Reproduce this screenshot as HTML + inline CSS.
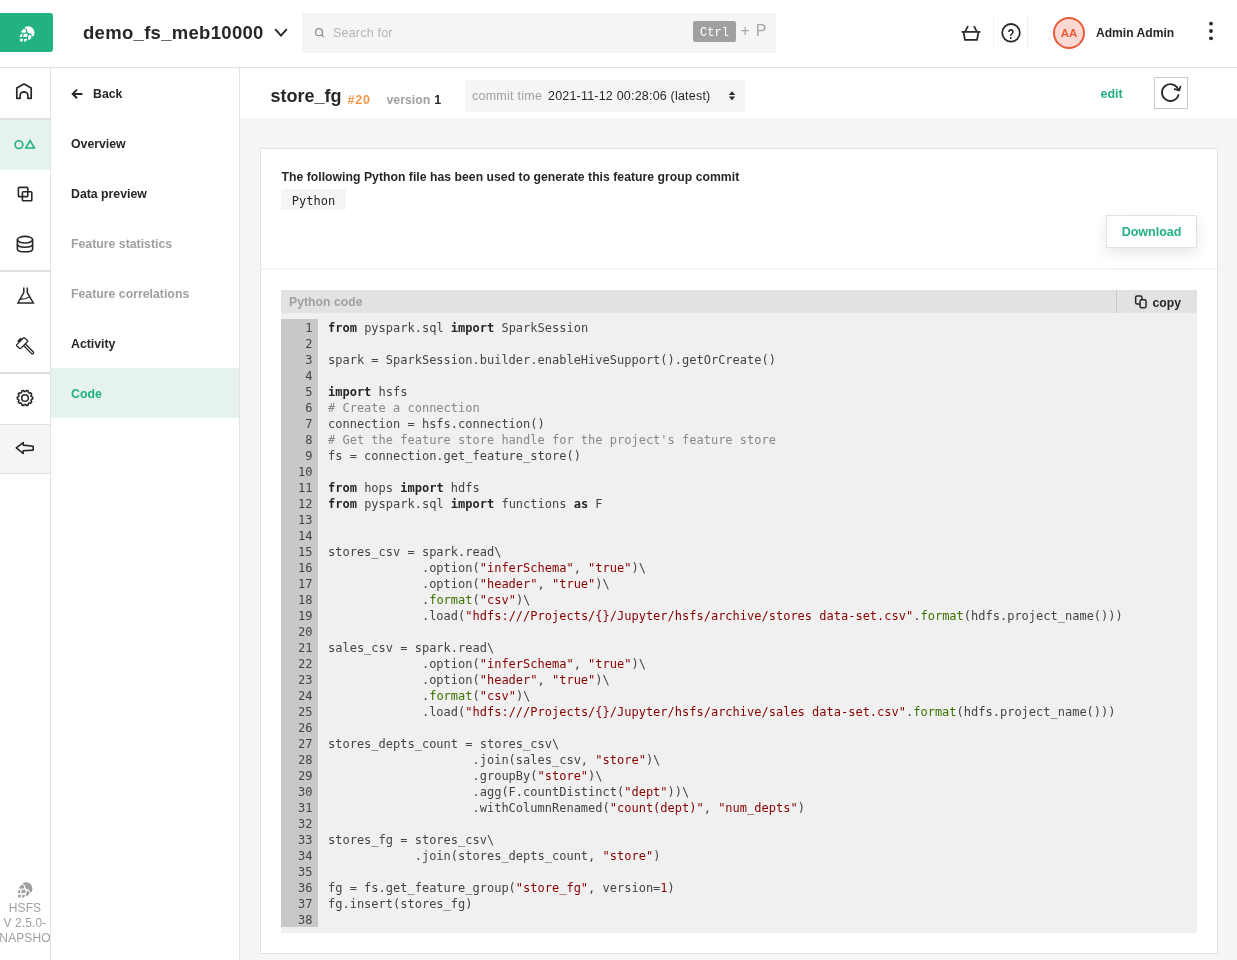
<!DOCTYPE html>
<html lang="en">
<head>
<meta charset="utf-8">
<title>store_fg - Code</title>
<style>
*{box-sizing:border-box;margin:0;padding:0}
html,body{width:1237px;height:960px;overflow:hidden;background:#f5f5f5;font-family:"Liberation Sans",sans-serif;color:#272727}
.abs{position:absolute}
#root{position:absolute;left:0;top:0;width:1237px;height:960px;overflow:hidden;will-change:transform}
#header{position:absolute;left:0;top:0;width:1237px;height:68px;background:#fff;border-bottom:1px solid #e2e2e2}
#logo{position:absolute;left:0;top:13px;width:53px;height:39px;background:#21b182;border-radius:0 3px 3px 0}
#proj{position:absolute;left:83px;top:21px;font-size:18.5px;font-weight:bold;color:#272727;letter-spacing:0.3px;line-height:24px;white-space:nowrap}
#search{position:absolute;left:302px;top:13px;width:474px;height:40px;background:#f5f5f5}
#search .ph{position:absolute;left:31px;top:13px;font-size:12.5px;color:#b4b4b4;line-height:15px;letter-spacing:0.2px}
#ctrl{position:absolute;left:391px;top:8px;width:43px;height:21px;background:#a0a0a0;border-radius:2px;color:#fff;font-family:"Liberation Mono",monospace;font-size:12px;line-height:24px;text-align:center;overflow:hidden}
#plusp{position:absolute;left:438.5px;top:8px;font-size:16px;color:#a8a8a8;line-height:20px;white-space:nowrap;word-spacing:1.5px}
#avatar{position:absolute;left:1053px;top:17px;width:32px;height:32px;border-radius:50%;background:#fbd9d3;border:2px solid #eb5a38;color:#eb5a38;font-size:11.5px;font-weight:bold;text-align:center;line-height:28px}
#uname{position:absolute;left:1096px;top:25px;font-size:12.1px;font-weight:bold;color:#272727;line-height:16px;white-space:nowrap}
.vsep{position:absolute;top:16px;width:1px;height:32px;background:#f0f0f0}
#nav{position:absolute;left:0;top:68px;width:51px;height:892px;background:#fff;border-right:1px solid #e2e2e2}
.nitem{position:absolute;left:0;width:50px;height:50px}
.nitem svg{position:absolute;left:14px;top:14px}
.nline{position:absolute;left:0;width:50px;height:1px;background:#dfdfdf}
#side{position:absolute;left:51px;top:68px;width:189px;height:892px;background:#fff;border-right:1px solid #e2e2e2}
.sitem{position:absolute;left:20px;font-size:12.3px;font-weight:bold;color:#272727;line-height:16px;white-space:nowrap}
.sitem.dis{color:#a0a0a0}
#selrow{position:absolute;left:0;top:300px;width:188px;height:50px;background:#e5f2ee}
#topbar{position:absolute;left:240px;top:68px;width:997px;height:50px;background:#fff}
#card{position:absolute;left:260px;top:148px;width:958px;height:806px;background:#fff;border:1px solid #e2e2e2}
#codehead{position:absolute;left:281px;top:290px;width:916px;height:23px;background:#e2e2e2;z-index:2}
#codebody{position:absolute;left:281px;top:312px;width:916px;height:621px;background:#f0f0f0}
#gutter{position:absolute;left:0;top:7px;width:37px;height:608px;background:#c8c8c8}
pre{font-family:"DejaVu Sans Mono","Liberation Mono",monospace;font-size:12px;line-height:16px;color:#444}
#nums{position:absolute;left:0;top:7.5px;width:31.4px;text-align:right;color:#444}
#code{position:absolute;left:47px;top:7.5px;white-space:pre}
.k{font-weight:bold;color:#272727}
.c{color:#888}
.s{color:#880000}
.b{color:#397300}

#qm{position:absolute;left:1000px;top:24.6px;width:22px;text-align:center;font-size:14px;font-weight:bold;line-height:18px;color:#272727;transform:scaleX(0.8)}
.nsel{position:absolute;left:0;top:52px;width:50px;height:50px;background:#e5f2ee}
.ngrey{position:absolute;left:0;top:357px;width:50px;height:48px;background:#f5f5f5}
#ver{position:absolute;left:-10px;top:833px;width:70px;text-align:center;font-size:12px;line-height:15px;color:#a0a0a0;letter-spacing:0.1px}
#fgname{position:absolute;left:30.5px;top:16px;font-size:18px;font-weight:bold;line-height:24px;color:#272727;white-space:nowrap}
#fgid{position:absolute;left:107.5px;top:24px;font-size:12.5px;font-weight:bold;line-height:16px;color:#f2994a;white-space:nowrap;letter-spacing:0.8px}
#verlab{position:absolute;left:146.5px;top:24px;font-size:12.3px;font-weight:bold;line-height:16px;color:#a0a0a0;white-space:nowrap}
#vernum{position:absolute;left:194.2px;top:24px;font-size:12.5px;font-weight:bold;line-height:16px;color:#272727}
#sel{position:absolute;left:225px;top:12px;width:280px;height:32px;background:#f5f5f5}
#ct{position:absolute;left:7px;top:8px;font-size:12.5px;line-height:16px;color:#a0a0a0;white-space:nowrap;letter-spacing:0.25px}
#cv{position:absolute;left:83px;top:8px;font-size:12.5px;line-height:16px;color:#272727;white-space:nowrap;letter-spacing:0.2px}
#edit{position:absolute;left:860.5px;top:18px;font-size:12.5px;font-weight:bold;line-height:16px;color:#21b182;white-space:nowrap}
#refresh{position:absolute;left:914px;top:9px;width:34px;height:32px;border:1px solid #c8c8c8;background:#fff}
#ctitle{position:absolute;left:20.5px;top:20px;letter-spacing:0.035px;font-size:12.2px;font-weight:bold;line-height:16px;color:#272727;white-space:nowrap}
#tag{position:absolute;left:20px;top:40px;width:65px;height:21px;background:#f5f5f5;border-radius:2px;font-family:"DejaVu Sans Mono","Liberation Mono",monospace;font-size:12px;line-height:24.5px;text-align:center;color:#272727}
#dl{position:absolute;left:845px;top:66px;width:91px;height:33px;border:1px solid #e2e2e2;background:#fff;box-shadow:0 5px 15px rgba(0,0,0,0.10);font-size:12.5px;font-weight:bold;color:#21b182;text-align:center;line-height:33px}
#csep{position:absolute;left:0;top:119px;width:956px;height:2px;background:#f5f5f5}
#chl{position:absolute;left:8px;top:4px;letter-spacing:0.05px;font-size:12.2px;font-weight:bold;line-height:16px;color:#a0a0a0;white-space:nowrap}
#chsep{position:absolute;left:835px;top:0;width:1px;height:23px;background:#c8c8c8}
#copy{position:absolute;left:871.5px;top:5px;font-size:12.2px;font-weight:bold;line-height:16px;color:#272727}
</style>
</head>
<body>
<div id="root">
<div id="header">
  <div id="logo">
    <svg class="abs" style="left:18px;top:11.5px" width="18" height="18" viewBox="18 24.5 18 18"><g fill="#fff"><path d="M24.3 27.4 C25.2 26.4 26.6 25.7 27.9 25.7 C31.6 25.7 34.5 28.6 34.4 32.2 C34.4 33.4 34.1 34.6 33.6 35.6 L32 35.9 C31.8 35 31.5 34.2 31 33.6 C30.2 32.8 29.2 32.6 28 32.6 C27.8 31.9 27.6 31.4 27.4 30.9 C27.4 29.6 26.6 28.4 25.3 27.8 Z"/><path d="M21 31.5 C21.6 30.2 22.6 29.1 23.7 28.4 C24.4 28.3 25 28.5 25.4 28.9 C26 29.3 26.3 30 26.2 30.6 C26.2 31.2 26 31.6 25.6 31.9 C24.6 32.3 23.4 32.4 22.4 32.2 Z"/><path d="M19.7 36.5 C19.7 35.8 19.9 35.2 20.1 34.7 C20.5 34 21.1 33.5 21.8 33.2 L22.7 33.2 C22.2 34.2 22 35.4 22 36.5 Z"/><path d="M23.25 36.5 C23.2 35.4 23.5 34.3 23.9 33.4 C24.8 33.4 25.6 33.3 26.4 33 C27 33.2 27.5 33.6 27.8 34.2 C27.4 34.9 27.1 35.7 27 36.5 Z"/><path d="M28 39 C27.9 37.9 28 36.9 28.3 35.9 C28.6 35.2 29 34.7 29.5 34.2 C30 34.2 30.5 34.5 30.8 34.9 C31.2 35.4 31.5 36.1 31.6 36.8 C31.3 37.4 30.8 37.9 30.3 38.4 C29.8 38.9 29.3 39.2 28.7 39.5 Z"/><path d="M20 38.2 H22.8 V40.9 L20 40.7 Z"/><path d="M24.1 38.4 L27 38.2 C26.9 38.9 26.9 39.5 26.8 40.1 C26.1 40.7 25.3 41.2 24.5 41.5 L24.1 41.3 Z"/></g></svg>
  </div>
  <div id="proj">demo_fs_meb10000</div>
  <svg class="abs" style="left:273px;top:26px" width="16" height="14" viewBox="0 0 16 14"><path d="M2.2 3.2 L8 9.6 L13.8 3.2" fill="none" stroke="#272727" stroke-width="1.9"/></svg>
  <div id="search">
    <svg class="abs" style="left:12px;top:14px" width="12" height="12" viewBox="0 0 12 12"><circle cx="5" cy="5.2" r="3.5" fill="none" stroke="#8c8c8c" stroke-width="1.2"/><path d="M7.6 7.8 L9.8 10" stroke="#8c8c8c" stroke-width="1.2"/></svg>
    <div class="ph">Search for</div>
    <div id="ctrl">Ctrl</div>
    <div id="plusp">+ P</div>
  </div>
  <svg class="abs" style="left:960px;top:24px" width="22" height="18" viewBox="0 0 22 18"><g fill="none" stroke="#272727" stroke-width="1.7"><path d="M1.6 7.9 H20.4"/><path d="M3.5 8 L5 15.9 H17 L18.5 8"/><path d="M5.4 7.2 L8 2.2"/><path d="M16.6 7.2 L14 2.2"/></g></svg>
  <div class="vsep" style="left:993px"></div>
  <svg class="abs" style="left:1000px;top:22px" width="22" height="22" viewBox="0 0 22 22"><circle cx="11" cy="10.8" r="8.8" fill="none" stroke="#272727" stroke-width="1.8"/></svg>
  <div id="qm">?</div>
  <div class="vsep" style="left:1027px"></div>
  <div id="avatar">AA</div>
  <div id="uname">Admin Admin</div>
  <svg class="abs" style="left:1207px;top:20px" width="8" height="24" viewBox="0 0 8 24"><circle cx="4" cy="3.6" r="1.9" fill="#272727"/><circle cx="4" cy="11" r="1.9" fill="#272727"/><circle cx="4" cy="18.3" r="1.9" fill="#272727"/></svg>
</div>

<div id="nav">
  <div class="nsel"></div>
  <div class="ngrey"></div>
  <div class="nline" style="top:50px;height:2px"></div>
  <div class="nline" style="top:202px;height:2px"></div>
  <div class="nline" style="top:304px;height:2px"></div>
  <div class="nline" style="top:356px"></div>
  <div class="nline" style="top:405px"></div>
  <svg class="abs" style="left:0;top:0" width="50" height="420" viewBox="0 68 50 420">
    <g fill="none" stroke="#272727" stroke-width="1.6" stroke-linejoin="round" stroke-linecap="round">
      <!-- home -->
      <path d="M16.8 98.3 V88 L24 83.9 L31.2 88 V98.3 H27.9 V95.2 A3.9 3.4 0 0 0 20.1 95.2 V98.3 Z" stroke-width="1.7"/>
      <!-- squares -->
      <rect x="18.4" y="187.4" width="9.4" height="9.2" rx="0.8"/>
      <rect x="22.4" y="191.7" width="9.4" height="9" rx="0.8"/>
      <!-- database -->
      <ellipse cx="25" cy="239.7" rx="7.6" ry="3.3"/>
      <path d="M17.4 239.7 V249.2 C17.4 250.7 20.8 251.8 25 251.8 C29.2 251.8 32.6 250.7 32.6 249.2 V239.7"/>
      <path d="M17.4 244.6 C17.4 246.1 20.8 247.2 25 247.2 C29.2 247.2 32.6 246.1 32.6 244.6"/>
      <!-- flask -->
      <path d="M23.8 287.4 V292.6 L17.9 303 H33.3 L27.3 292.6 V287.4" stroke-width="1.5" stroke-linejoin="miter" stroke-linecap="butt"/>
      <path d="M20.2 299.4 C22.4 298.2 24.2 299.6 26 298.6 C27.2 298 28.2 297.2 29.6 297" stroke-width="1.1"/>
      <!-- hammer -->
      <path d="M16.8 344.6 L23.4 338 Q24 337.4 24.6 338 L27.4 340.6 Q28 341.2 27.4 341.8 L20.8 348.4 Q20.2 349 19.6 348.4 L16.8 345.8 Q16.2 345.2 16.8 344.6 Z" stroke-width="1.3"/>
      <path d="M25.6 344.2 L33.4 352 Q34 352.8 33.2 353.6 Q32.4 354.4 31.6 353.6 L23.8 345.8" stroke-width="1.3"/>
      <path d="M18.6 341.2 L20.8 339" stroke-width="2.2"/>
      <!-- gear -->
      <circle cx="25" cy="398" r="3.3" stroke-width="1.5"/>
      <path stroke-width="1.5" d="M32.64 397.03 A7.7 7.7 0 0 1 32.64 398.97 L31.35 399.38 A6.5 6.5 0 0 1 30.95 400.62 L31.75 401.71 A7.7 7.7 0 0 1 30.61 403.27 L29.33 402.85 A6.5 6.5 0 0 1 28.27 403.62 L28.28 404.97 A7.7 7.7 0 0 1 26.44 405.56 L25.65 404.47 A6.5 6.5 0 0 1 24.35 404.47 L23.56 405.56 A7.7 7.7 0 0 1 21.72 404.97 L21.73 403.62 A6.5 6.5 0 0 1 20.67 402.85 L19.39 403.27 A7.7 7.7 0 0 1 18.25 401.71 L19.05 400.62 A6.5 6.5 0 0 1 18.65 399.38 L17.36 398.97 A7.7 7.7 0 0 1 17.36 397.03 L18.65 396.62 A6.5 6.5 0 0 1 19.05 395.38 L18.25 394.29 A7.7 7.7 0 0 1 19.39 392.73 L20.67 393.15 A6.5 6.5 0 0 1 21.73 392.38 L21.72 391.03 A7.7 7.7 0 0 1 23.56 390.44 L24.35 391.53 A6.5 6.5 0 0 1 25.65 391.53 L26.44 390.44 A7.7 7.7 0 0 1 28.28 391.03 L28.27 392.38 A6.5 6.5 0 0 1 29.33 393.15 L30.61 392.73 A7.7 7.7 0 0 1 31.75 394.29 L30.95 395.38 A6.5 6.5 0 0 1 31.35 396.62 Z"/>
      <!-- arrow -->
      <path d="M16.3 447.8 L23.2 442.6 V445.1 L33.2 446.2 V450.1 L23.2 450.8 V453.5 Z" stroke-width="1.6"/>
    </g>
    <g fill="none" stroke="#21b182" stroke-width="1.6">
      <circle cx="18.9" cy="144.6" r="3.9"/>
      <path d="M30.1 140.6 L34.4 148 H25.8 Z" stroke-linejoin="miter"/>
    </g>
  </svg>
  <svg class="abs" style="left:15.8px;top:812.6px" width="18" height="18" viewBox="18 24.5 18 18"><g fill="#a0a0a0"><path d="M24.3 27.4 C25.2 26.4 26.6 25.7 27.9 25.7 C31.6 25.7 34.5 28.6 34.4 32.2 C34.4 33.4 34.1 34.6 33.6 35.6 L32 35.9 C31.8 35 31.5 34.2 31 33.6 C30.2 32.8 29.2 32.6 28 32.6 C27.8 31.9 27.6 31.4 27.4 30.9 C27.4 29.6 26.6 28.4 25.3 27.8 Z"/><path d="M21 31.5 C21.6 30.2 22.6 29.1 23.7 28.4 C24.4 28.3 25 28.5 25.4 28.9 C26 29.3 26.3 30 26.2 30.6 C26.2 31.2 26 31.6 25.6 31.9 C24.6 32.3 23.4 32.4 22.4 32.2 Z"/><path d="M19.7 36.5 C19.7 35.8 19.9 35.2 20.1 34.7 C20.5 34 21.1 33.5 21.8 33.2 L22.7 33.2 C22.2 34.2 22 35.4 22 36.5 Z"/><path d="M23.25 36.5 C23.2 35.4 23.5 34.3 23.9 33.4 C24.8 33.4 25.6 33.3 26.4 33 C27 33.2 27.5 33.6 27.8 34.2 C27.4 34.9 27.1 35.7 27 36.5 Z"/><path d="M28 39 C27.9 37.9 28 36.9 28.3 35.9 C28.6 35.2 29 34.7 29.5 34.2 C30 34.2 30.5 34.5 30.8 34.9 C31.2 35.4 31.5 36.1 31.6 36.8 C31.3 37.4 30.8 37.9 30.3 38.4 C29.8 38.9 29.3 39.2 28.7 39.5 Z"/><path d="M20 38.2 H22.8 V40.9 L20 40.7 Z"/><path d="M24.1 38.4 L27 38.2 C26.9 38.9 26.9 39.5 26.8 40.1 C26.1 40.7 25.3 41.2 24.5 41.5 L24.1 41.3 Z"/></g></svg>
  <div id="ver">HSFS<br>V 2.5.0-<br>NAPSHO</div>
</div>
<div id="side">
  <div id="selrow"></div>
  <svg class="abs" style="left:20px;top:20px" width="13" height="12" viewBox="0 0 13 12"><path d="M11.4 5.9 H2.2 M6 1.6 L1.7 5.9 L6 10.2" fill="none" stroke="#272727" stroke-width="2"/></svg>
  <div class="sitem" style="top:18px;left:42px">Back</div>
  <div class="sitem" style="top:68px">Overview</div>
  <div class="sitem" style="top:118px">Data preview</div>
  <div class="sitem dis" style="top:168px">Feature statistics</div>
  <div class="sitem dis" style="top:218px">Feature correlations</div>
  <div class="sitem" style="top:268px">Activity</div>
  <div class="sitem" style="top:318px;color:#21b182">Code</div>
</div>

<div id="topbar">
  <div id="fgname">store_fg</div>
  <div id="fgid">#20</div>
  <div id="verlab">version</div>
  <div id="vernum">1</div>
  <div id="sel">
    <div id="ct">commit time</div>
    <div id="cv">2021-11-12 00:28:06 (latest)</div>
    <svg class="abs" style="left:262px;top:10px" width="10" height="13" viewBox="0 0 10 13"><path d="M5 1.2 L8.2 4.9 H1.8 Z M5 10.2 L8.2 6.6 H1.8 Z" fill="#272727"/></svg>
  </div>
  <div id="edit">edit</div>
  <div id="refresh">
    <svg class="abs" style="left:5px;top:4px" width="22" height="22" viewBox="0 0 22 22"><g fill="none" stroke="#272727" stroke-width="1.9"><path d="M18.6 12.4 A8.4 8.4 0 1 1 18.5 8.3"/><path d="M13.9 6.9 L19.3 8.5 L20.5 3.9" stroke-width="1.7"/></g></svg>
  </div>
</div>
<div id="card">
  <div id="ctitle">The following Python file has been used to generate this feature group commit</div>
  <div id="tag">Python</div>
  <div id="dl">Download</div>
  <div id="csep"></div>
</div>
<div id="codehead">
  <div id="chl">Python code</div>
  <div id="chsep"></div>
  <svg class="abs" style="left:852px;top:4px" width="15" height="16" viewBox="0 0 15 16"><g stroke="#272727" stroke-width="1.5" fill="#e2e2e2"><rect x="2.65" y="1.95" width="6.3" height="8" rx="1.5"/><rect x="7.05" y="5.65" width="6" height="8.2" rx="1.5"/></g></svg>
  <div id="copy">copy</div>
</div>
<div id="codebody">
  <div id="gutter"></div>
<pre id="nums">1
2
3
4
5
6
7
8
9
10
11
12
13
14
15
16
17
18
19
20
21
22
23
24
25
26
27
28
29
30
31
32
33
34
35
36
37
38</pre>
<pre id="code"><span class="k">from</span> pyspark.sql <span class="k">import</span> SparkSession

spark = SparkSession.builder.enableHiveSupport().getOrCreate()

<span class="k">import</span> hsfs
<span class="c"># Create a connection</span>
connection = hsfs.connection()
<span class="c"># Get the feature store handle for the project's feature store</span>
fs = connection.get_feature_store()

<span class="k">from</span> hops <span class="k">import</span> hdfs
<span class="k">from</span> pyspark.sql <span class="k">import</span> functions <span class="k">as</span> F


stores_csv = spark.read\
             .option(<span class="s">"inferSchema"</span>, <span class="s">"true"</span>)\
             .option(<span class="s">"header"</span>, <span class="s">"true"</span>)\
             .<span class="b">format</span>(<span class="s">"csv"</span>)\
             .load(<span class="s">"hdfs:///Projects/{}/Jupyter/hsfs/archive/stores data-set.csv"</span>.<span class="b">format</span>(hdfs.project_name()))

sales_csv = spark.read\
             .option(<span class="s">"inferSchema"</span>, <span class="s">"true"</span>)\
             .option(<span class="s">"header"</span>, <span class="s">"true"</span>)\
             .<span class="b">format</span>(<span class="s">"csv"</span>)\
             .load(<span class="s">"hdfs:///Projects/{}/Jupyter/hsfs/archive/sales data-set.csv"</span>.<span class="b">format</span>(hdfs.project_name()))

stores_depts_count = stores_csv\
                    .join(sales_csv, <span class="s">"store"</span>)\
                    .groupBy(<span class="s">"store"</span>)\
                    .agg(F.countDistinct(<span class="s">"dept"</span>))\
                    .withColumnRenamed(<span class="s">"count(dept)"</span>, <span class="s">"num_depts"</span>)

stores_fg = stores_csv\
            .join(stores_depts_count, <span class="s">"store"</span>)

fg = fs.get_feature_group(<span class="s">"store_fg"</span>, version=<span class="s">1</span>)
fg.insert(stores_fg)
</pre>
</div>
</div>
</body>
</html>
